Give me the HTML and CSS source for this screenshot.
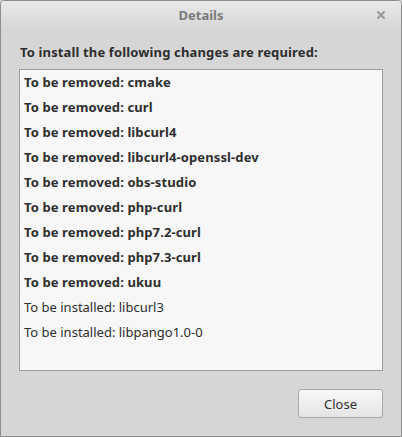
FILE: index.html
```html
<!DOCTYPE html>
<html>
<head>
<meta charset="utf-8">
<link rel="stylesheet" href="styles.css">
</head>
<body>
<div class="window">
  <div class="titlebar">
    <span class="title">Details</span>
    <span class="close-x">
      <svg width="10" height="10" viewBox="0 0 10 10"><path d="M1.5 1.5 L8.5 8.5 M8.5 1.5 L1.5 8.5" stroke="#9a9a9a" stroke-width="2.2" stroke-linecap="butt"/></svg>
    </span>
  </div>
  <div class="content">
    <div class="heading">To install the following changes are required:</div>
    <div class="list">
      <div class="row bold">To be removed: cmake</div>
      <div class="row bold">To be removed: curl</div>
      <div class="row bold">To be removed: libcurl4</div>
      <div class="row bold">To be removed: libcurl4-openssl-dev</div>
      <div class="row bold">To be removed: obs-studio</div>
      <div class="row bold">To be removed: php-curl</div>
      <div class="row bold">To be removed: php7.2-curl</div>
      <div class="row bold">To be removed: php7.3-curl</div>
      <div class="row bold">To be removed: ukuu</div>
      <div class="row">To be installed: libcurl3</div>
      <div class="row">To be installed: libpango1.0-0</div>
    </div>
    <div class="actions">
      <button class="btn">Close</button>
    </div>
  </div>
</div>
</body>
</html>
```

FILE: styles.css
```css
html, body {
  margin: 0;
  padding: 0;
  background: #d6d6d6;
}
body {
  font-family: "Noto Sans", sans-serif;
  font-size: 13px;
  color: #303030;
}
.window {
  width: 402px;
  height: 437px;
  box-sizing: border-box;
  border: 1px solid #8e8e8e;
  border-radius: 4px 4px 0 0;
  background: #d6d6d6;
  display: flex;
  flex-direction: column;
  overflow: hidden;
}
.titlebar {
  height: 29px;
  flex: none;
  background: linear-gradient(#e9e9e9, #d6d6d6);
  display: flex;
  align-items: center;
  justify-content: center;
  position: relative;
}
.title {
  font-weight: bold;
  color: #7a7a7a;
  font-size: 13px;
  margin-top: -2px;
}
.close-x {
  position: absolute;
  right: 15px;
  top: 9px;
  display: flex;
}
.content {
  padding: 10px 18px 0 18px;
  display: flex;
  flex-direction: column;
}
.heading {
  font-weight: bold;
  letter-spacing: 0.14px;
  height: 24px;
  line-height: 24px;
  padding-left: 1px;
  color: #2e2e2e;
}
.list {
  margin-top: 5px;
  height: 302px;
  box-sizing: border-box;
  border: 1px solid #9c9c9c;
  background: #f7f7f7;
  padding-left: 4px;
}
.row {
  height: 25px;
  line-height: 25px;
  color: #2e2e2e;
}
.row.bold {
  font-weight: bold;
  letter-spacing: 0.11px;
}
.actions {
  display: flex;
  justify-content: flex-end;
  margin-top: 18px;
}
.btn {
  width: 85px;
  height: 29px;
  font-family: "Noto Sans", sans-serif;
  font-size: 13px;
  color: #303030;
  border: 1px solid #a8a8a8;
  border-radius: 3px;
  background: linear-gradient(#f8f8f8, #e4e4e4);
  padding: 0;
}
```
